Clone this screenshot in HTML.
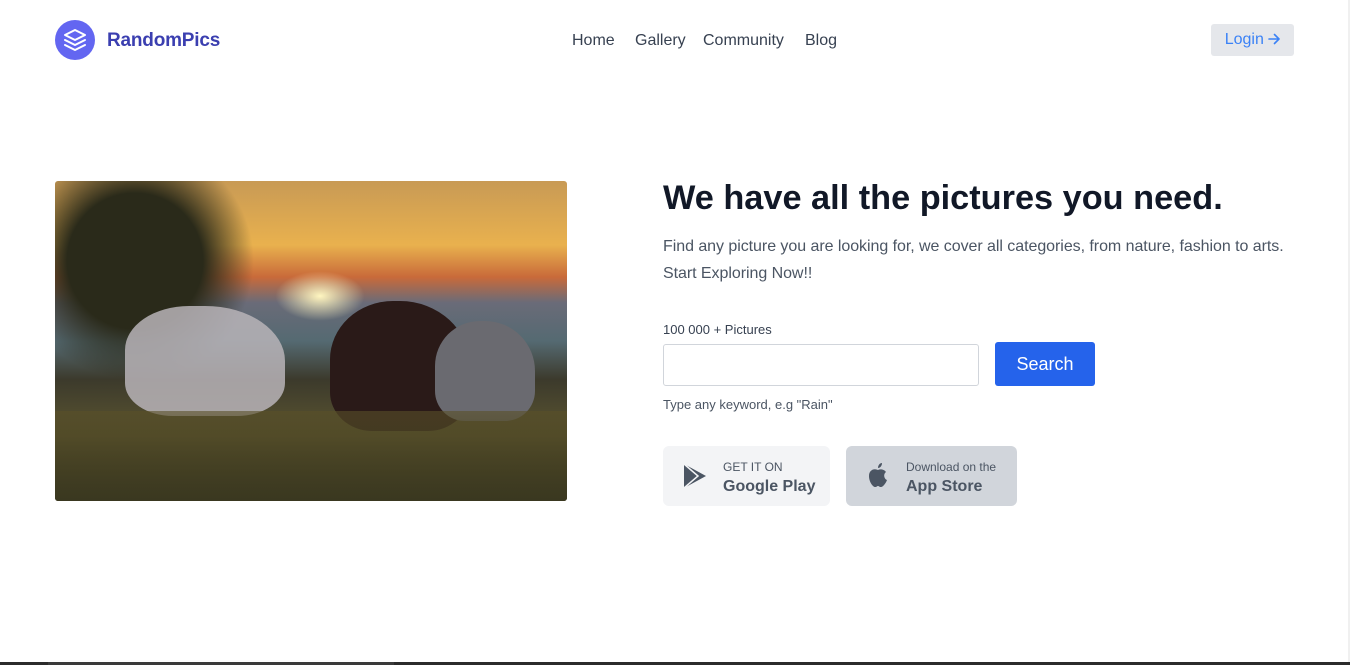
<!DOCTYPE html>
<html><head><meta charset="utf-8"><style>
*{box-sizing:border-box;margin:0;padding:0}
html,body{width:1350px;height:665px;overflow:hidden;background:#fff;font-family:"Liberation Sans",sans-serif;color:#111827}
.logo{position:absolute;left:55px;top:20px;width:40px;height:40px;border-radius:50%;background:#6366f1}
.brand{position:absolute;left:107px;top:30px;font-size:19px;font-weight:bold;color:#3b3fb0;letter-spacing:-0.2px}
.nav{position:absolute;top:32px;font-size:16px;color:#374151}
.login{position:absolute;left:1211px;top:24px;width:83px;height:32px;background:#e5e7eb;border-radius:3px;color:#3b82f6;font-size:16px;line-height:32px;text-align:center}
.img{position:absolute;left:55px;top:181px;width:512px;height:320px;border-radius:3px;overflow:hidden;
background:linear-gradient(180deg,#c89a55 0%,#e9b14e 20%,#c96a3a 30%,#6a6b78 38%,#556a72 50%,#3c3a2c 62%,#5c5630 80%,#3e3a20 100%)}
h1{position:absolute;left:663px;top:179px;font-size:34.3px;font-weight:bold;color:#111827;white-space:nowrap}
.p{position:absolute;left:663px;top:233px;font-size:16px;line-height:27px;color:#4b5563;width:640px;letter-spacing:-0.05px}
.lbl{position:absolute;left:663px;top:322px;font-size:13px;color:#374151}
.inp{position:absolute;left:663px;top:344px;width:316px;height:42px;border:1px solid #d1d5db;border-radius:3px}
.btn{position:absolute;left:995px;top:342px;width:100px;height:44px;background:#2563eb;border-radius:3px;color:#fff;font-size:18px;line-height:44px;text-align:center}
.hint{position:absolute;left:663px;top:397px;font-size:13px;color:#4b5563}
.store{position:absolute;top:446px;height:60px;border-radius:6px}
.store .s{position:absolute;left:60px;top:14px;font-size:12px;color:#4b5563}
.store .b{position:absolute;left:60px;top:32px;font-size:16px;font-weight:bold;color:#4b5563}
</style></head><body>
<div class="logo"><svg width="40" height="40" viewBox="0 0 40 40" fill="none" stroke="#fff" stroke-width="2" stroke-linejoin="round" stroke-linecap="round"><path d="M20 10 L30 15 L20 20 L10 15 Z"/><path d="M10 20 L20 25 L30 20"/><path d="M10 25 L20 30 L30 25"/></svg></div>
<div class="brand">RandomPics</div>
<div class="nav" style="left:572px">Home</div>
<div class="nav" style="left:635px">Gallery</div>
<div class="nav" style="left:703px">Community</div>
<div class="nav" style="left:805px">Blog</div>
<div class="login">Login <svg width="12" height="12" viewBox="0 0 12 12" style="vertical-align:-1px" fill="none" stroke="#3b82f6" stroke-width="1.6" stroke-linecap="round" stroke-linejoin="round"><path d="M1 6 H11 M6.5 1.5 L11 6 L6.5 10.5"/></svg></div>
<div class="img">
<div style="position:absolute;left:220px;top:90px;width:90px;height:50px;border-radius:50%;background:radial-gradient(#fff6c0,rgba(255,200,80,0) 70%)"></div>
<div style="position:absolute;left:0;top:0;width:200px;height:200px;background:radial-gradient(ellipse at 40% 40%,#2a2a1a 40%,rgba(0,0,0,0) 70%)"></div>
<div style="position:absolute;left:70px;top:125px;width:160px;height:110px;border-radius:40% 50% 30% 30%;background:#b8b4b8;opacity:.85"></div>
<div style="position:absolute;left:275px;top:120px;width:140px;height:130px;border-radius:45% 50% 30% 30%;background:#2a1a18"></div>
<div style="position:absolute;left:380px;top:140px;width:100px;height:100px;border-radius:45% 50% 30% 30%;background:#6a6a70"></div>
<div style="position:absolute;left:0;bottom:0;width:512px;height:90px;background:linear-gradient(180deg,rgba(90,80,40,.6),#3a3820)"></div>
</div>
<h1>We have all the pictures you need.</h1>
<div class="p">Find any picture you are looking for, we cover all categories, from nature, fashion to arts. Start Exploring Now!!</div>
<div class="lbl">100 000 + Pictures</div>
<div class="inp"></div>
<div class="btn">Search</div>
<div class="hint">Type any keyword, e.g "Rain"</div>
<div class="store" style="left:663px;width:167px;background:#f3f4f6">
<svg style="position:absolute;left:20px;top:17px" width="24" height="26" viewBox="0 0 24 26"><path d="M1 1 L23 13 L1 25 Z" fill="#4b5563"/><path d="M1 1 L15 13 L1 25 M15 13" stroke="#f3f4f6" stroke-width="1.5" fill="none"/></svg>
<div class="s">GET IT ON</div><div class="b">Google Play</div></div>
<div class="store" style="left:846px;width:171px;background:#d1d5db">
<svg style="position:absolute;left:21px;top:16px" width="22" height="26" viewBox="0 0 22 26"><path d="M11 8 C7 6 2 8 2 14 C2 20 6 25 8 25 C10 25 10 24 11 24 C12 24 12 25 14 25 C16 25 19 21 20 18 C17 17 16 12 19 10 C17 7 13 7 11 8 Z" fill="#4b5563"/><path d="M11 6 C11 3 13 1 15 1 C15 4 13 6 11 6 Z" fill="#4b5563"/></svg>
<div class="s">Download on the</div><div class="b">App Store</div></div>
<div style="position:absolute;right:0;top:0;width:2px;height:665px;background:#f0f0f0"></div>
<div style="position:absolute;left:0;top:662px;width:1350px;height:3px;background:#2b2b2b"></div>
<div style="position:absolute;left:48px;top:662px;width:346px;height:3px;background:#3a3a3a"></div>
</body></html>
